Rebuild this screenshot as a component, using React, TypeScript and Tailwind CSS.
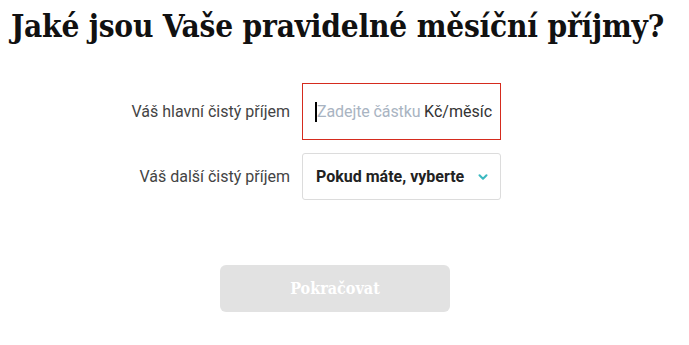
import { ChevronDown } from 'lucide-react';

export default function App() {
  return (
    <div className="w-[689px] h-[345px] bg-white overflow-hidden font-['Roboto','Liberation_Sans',sans-serif]">
      {/* Heading */}
      <h1 className="pt-[8px] pr-[14px] text-center text-[31.3px] leading-[36px] font-bold text-[#111] font-['DejaVu_Serif','Liberation_Serif',serif] font-stretch-condensed tracking-[-0.2px] whitespace-nowrap">
        Jaké jsou Vaše pravidelné měsíční příjmy?
      </h1>

      {/* Form */}
      <div className="mt-[39px] flex flex-col gap-[13px]">
        <div className="flex items-center">
          <label className="w-[290px] text-right text-[16px] text-[#444]">Váš hlavní čistý příjem</label>
          <div className="ml-[12px] w-[199px] h-[57px] border border-[#d52b1e] flex items-center pl-[12px] pr-[8px] whitespace-nowrap">
            <span className="w-[2px] h-[20px] bg-black" />
            <span className="text-[16px] text-[#a9b4c2] tracking-[-0.1px]">Zadejte částku</span>
            <span className="ml-auto text-[16px] text-[#333]">Kč/měsíc</span>
          </div>
        </div>
        <div className="flex items-center">
          <label className="w-[290px] text-right text-[16px] text-[#444]">Váš další čistý příjem</label>
          <div className="ml-[12px] w-[199px] h-[47px] border border-[#dcdcdc] rounded-[3px] flex items-center pl-[13px] pr-[10px] whitespace-nowrap">
            <span className="text-[16px] font-bold text-[#222]">Pokud máte, vyberte</span>
            <ChevronDown className="ml-auto w-[14px] h-[14px] text-[#3bb9c0]" strokeWidth={3.5} />
          </div>
        </div>
      </div>

      {/* Button */}
      <div className="mt-[65px] flex justify-center">
        <button className="w-[230px] h-[47px] rounded-[6px] bg-[#e2e2e2] text-white text-[16px] font-bold font-['DejaVu_Serif','Liberation_Serif',serif] font-stretch-condensed ml-[-19px]">
          Pokračovat
        </button>
      </div>
    </div>
  );
}
